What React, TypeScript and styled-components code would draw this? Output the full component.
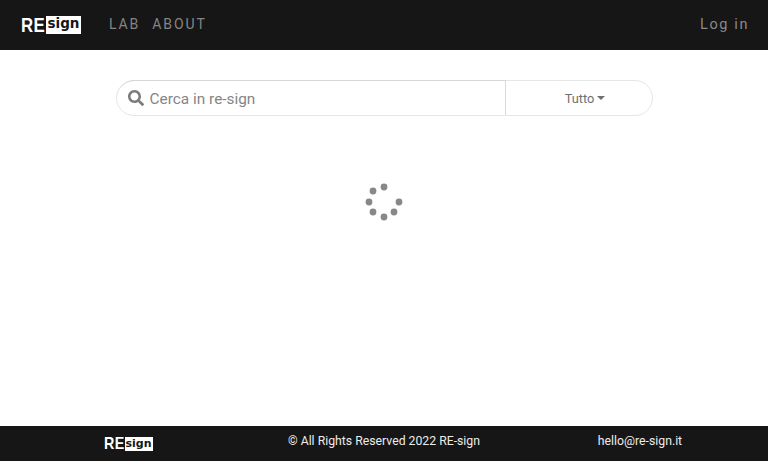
import React from 'react'
import styled, { createGlobalStyle } from 'styled-components'
import { FaSearch } from 'react-icons/fa'

const GlobalStyle = createGlobalStyle`
  html, body {
    margin: 0;
    height: 100%;
    font-family: Roboto, "Liberation Sans", sans-serif;
    background: #fff;
  }
  #root {
    height: 100%;
  }
`
const Page = styled.div`
  display: flex;
  flex-direction: column;
  height: 461px;
`
const Header = styled.header`
  display: flex;
  align-items: center;
  height: 50px;
  padding: 0 19px 0 21px;
  background: #161616;
`
const Nav = styled.nav`
  display: flex;
  gap: 12px;
  margin-left: 28px;
  margin-top: -2px;
`
const NavLink = styled.a`
  color: #858585;
  font-size: 14px;
  letter-spacing: 1.9px;
`
const LogIn = styled.a`
  margin-left: auto;
  margin-top: -2px;
  color: #8a8a8a;
  font-size: 14.5px;
  letter-spacing: 1.6px;
`
const LogoWrap = styled.div<{ small?: boolean }>`
  display: flex;
  align-items: center;
  gap: 1px;
  height: ${(p) => (p.small ? '16px' : '18px')};
`
const LogoRe = styled.span<{ small?: boolean }>`
  display: block;
  width: ${(p) => (p.small ? '20px' : '24px')};
  color: #fff;
  font-family: "Liberation Sans", sans-serif;
  font-weight: 700;
  font-size: ${(p) => (p.small ? '17px' : '20px')};
  line-height: 1;
  letter-spacing: 0.5px;
  transform: scaleX(0.84);
  transform-origin: left center;
`
const LogoSign = styled.span<{ small?: boolean }>`
  display: flex;
  align-items: center;
  justify-content: center;
  box-sizing: border-box;
  width: ${(p) => (p.small ? '28px' : '35px')};
  height: ${(p) => (p.small ? '14px' : '18px')};
  padding-bottom: ${(p) => (p.small ? '1px' : '2px')};
  background: #fff;
  color: #161616;
  font-family: "DejaVu Sans", sans-serif;
  font-weight: 700;
  font-size: ${(p) => (p.small ? '11px' : '13.5px')};
  line-height: 1;
`
const Main = styled.main`
  display: flex;
  flex: 1;
  flex-direction: column;
  align-items: center;
  padding-top: 30px;
`
const SearchBar = styled.div`
  display: flex;
  box-sizing: border-box;
  width: 537px;
  height: 36px;
  border: 1px solid #e6e6e6;
  border-radius: 18px;
`
const InputBox = styled.div`
  display: flex;
  flex: 1;
  align-items: center;
  gap: 6px;
  padding-left: 11px;
  border-right: 1px solid #d8d8d8;
  border-top: 1px solid #d8d8d8;
  margin-top: -1px;
  border-top-left-radius: 18px;
`
const SearchInput = styled.input`
  flex: 1;
  min-width: 0;
  border: 0;
  outline: 0;
  padding: 1px 0 0 0;
  background: transparent;
  font-family: inherit;
  font-size: 15.4px;
  color: #495057;
  &::placeholder {
    color: #858585;
    opacity: 1;
  }
`
const FilterButton = styled.div`
  display: flex;
  align-items: center;
  justify-content: center;
  box-sizing: border-box;
  width: 146px;
  padding-left: 13px;
  color: #6f6f6f;
  font-size: 12.8px;
`
const Caret = styled.span`
  width: 0;
  height: 0;
  margin-left: 3px;
  border-top: 4px solid #6f6f6f;
  border-left: 4px solid transparent;
  border-right: 4px solid transparent;
`
const SpinnerWrap = styled.div`
  margin-top: 67px;
  width: 38px;
  height: 40px;
  line-height: 0;
`
const Footer = styled.footer`
  display: grid;
  grid-template-columns: 256px 256px 256px;
  align-items: center;
  height: 35px;
  background: #161616;
  color: #ececec;
  font-size: 12.25px;
`
const FooterCell = styled.div<{ raised?: boolean }>`
  display: flex;
  justify-content: center;
  padding-bottom: ${(p) => (p.raised ? '6px' : '0')};
`

const dots = [
  [19, 4],
  [8, 8],
  [4, 19],
  [8, 29],
  [19, 34],
  [29, 29],
  [34, 19]
]

const Logo: React.FC<{ small?: boolean }> = ({ small }) => (
  <LogoWrap small={small}>
    <LogoRe small={small}>RE</LogoRe>
    <LogoSign small={small}>sign</LogoSign>
  </LogoWrap>
)

const App: React.FC = () => {
  return (
    <Page>
      <GlobalStyle />
      <Header>
        <Logo />
        <Nav>
          <NavLink>LAB</NavLink>
          <NavLink>ABOUT</NavLink>
        </Nav>
        <LogIn>Log in</LogIn>
      </Header>
      <Main>
        <SearchBar>
          <InputBox>
            <FaSearch size={16} color="#7b7b7b" />
            <SearchInput placeholder="Cerca in re-sign" />
          </InputBox>
          <FilterButton>
            Tutto
            <Caret />
          </FilterButton>
        </SearchBar>
        <SpinnerWrap>
          <svg width="38" height="40" viewBox="0 0 38 40">
            {dots.map(([cx, cy]) => (
              <circle key={`${cx}-${cy}`} cx={cx} cy={cy} r="3.4" fill="#888" />
            ))}
          </svg>
        </SpinnerWrap>
      </Main>
      <Footer>
        <FooterCell>
          <Logo small />
        </FooterCell>
        <FooterCell raised>© All Rights Reserved 2022 RE-sign</FooterCell>
        <FooterCell raised>hello@re-sign.it</FooterCell>
      </Footer>
    </Page>
  )
}

export default App
